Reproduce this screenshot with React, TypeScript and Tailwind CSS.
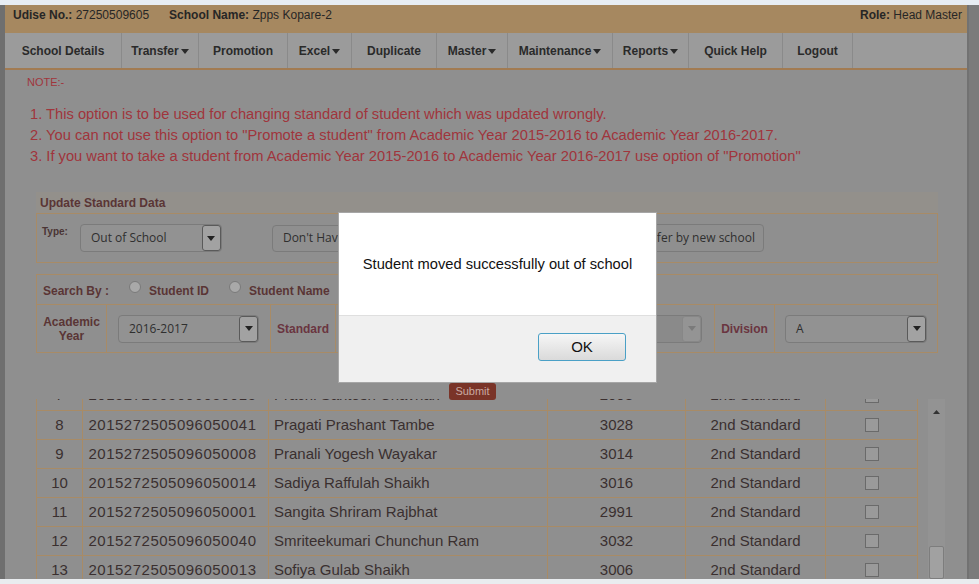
import React from "react";

const navItems = [
  { label: "School Details", w: "w-[117px]", arrow: false },
  { label: "Transfer", w: "w-[77px]", arrow: true },
  { label: "Promotion", w: "w-[89px]", arrow: false },
  { label: "Excel", w: "w-[64px]", arrow: true },
  { label: "Duplicate", w: "w-[85px]", arrow: false },
  { label: "Master", w: "w-[71px]", arrow: true },
  { label: "Maintenance", w: "w-[105px]", arrow: true },
  { label: "Reports", w: "w-[76px]", arrow: true },
  { label: "Quick Help", w: "w-[94px]", arrow: false },
  { label: "Logout", w: "w-[70px]", arrow: false },
];

const rows = [
  ["7", "2015272505096050015", "Prachi Santosh Chavhan", "2993"],
  ["8", "2015272505096050041", "Pragati Prashant Tambe", "3028"],
  ["9", "2015272505096050008", "Pranali Yogesh Wayakar", "3014"],
  ["10", "2015272505096050014", "Sadiya Raffulah Shaikh", "3016"],
  ["11", "2015272505096050001", "Sangita Shriram Rajbhat", "2991"],
  ["12", "2015272505096050040", "Smriteekumari Chunchun Ram", "3032"],
  ["13", "2015272505096050013", "Sofiya Gulab Shaikh", "3006"],
];

function Caret({ className = "" }: { className?: string }) {
  return (
    <svg width="8" height="5" viewBox="0 0 8 5" className={className}>
      <path d="M0 0h8L4 5z" fill="currentColor" />
    </svg>
  );
}

function Select({
  value,
  w,
  disabled = false,
}: {
  value: string;
  w: string;
  disabled?: boolean;
}) {
  return (
    <div
      className={`${w} h-[28px] flex items-center rounded-[4px] border border-[#7b7b7b] ${
        disabled ? "bg-[#8a8a8a]" : "bg-[#929292]"
      }`}
    >
      <span className="flex-1 pl-[10px] text-[12px] text-[#2f2f2f] [font-family:'Open_Sans',sans-serif]">
        {value}
      </span>
      <div
        className={`w-[19px] h-[26px] flex items-center justify-center rounded-[3px] border ${
          disabled
            ? "border-[#878787] bg-[#949494] text-[#7a7a7a]"
            : "border-[#5a5a5a] bg-[#a2a2a2] text-[#222]"
        }`}
      >
        <Caret />
      </div>
    </div>
  );
}

function Radio() {
  return (
    <span className="inline-block w-[12px] h-[12px] rounded-full border border-[#7a7a7a] bg-[#a9a9a9] -mt-[8px]" />
  );
}

export default function App() {
  return (
    <div className="relative w-[979px] h-[584px] overflow-hidden bg-[#8f8f8f] [font-family:'Liberation_Sans',Arial,sans-serif]">
      <div className="h-[5px] bg-[#e7edf3]" />
      <div className="flex h-[574px]">
        <div className="w-[5px] bg-[#6f6f6f]" />
        <div className="w-[962px] flex flex-col">
          {/* header */}
          <div className="h-[28px] shrink-0 flex items-start justify-between pt-[3px] pl-[8px] pr-[5px] bg-[#a68860] text-[12px] leading-[14px] text-[#262626]">
            <div className="flex gap-[20px]">
              <span>
                <b>Udise No.:</b> 27250509605
              </span>
              <span>
                <b>School Name:</b> Zpps Kopare-2
              </span>
            </div>
            <span>
              <b>Role:</b> Head Master
            </span>
          </div>

          {/* nav */}
          <div className="h-[37px] shrink-0 flex bg-[#9b9b9b] border-b-[2px] border-[#a27b52]">
            {navItems.map((n) => (
              <div
                key={n.label}
                className={`${n.w} flex items-center justify-center gap-[2px] border-r border-[#8a8a8a] text-[12px] font-bold text-[#2a2a2a]`}
              >
                {n.label}
                {n.arrow && <Caret className="mt-[2px]" />}
              </div>
            ))}
          </div>

          {/* content */}
          <div className="flex-1 min-h-0 flex flex-col">
            <div className="shrink-0 pt-[6px] pl-[22px] text-[11px] leading-[13px] text-[#a0353c]">NOTE:-</div>
            <div className="shrink-0 mt-[15px] pl-[25px] text-[14.7px] leading-[21px] text-[#a0353c]">
              <div>1. This option is to be used for changing standard of student which was updated wrongly.</div>
              <div>
                2. You can not use this option to "Promote a student" from Academic Year 2015-2016 to Academic Year
                2016-2017.
              </div>
              <div>
                3. If you want to take a student from Academic Year 2015-2016 to Academic Year 2016-2017 use option of
                "Promotion"
              </div>
            </div>

            {/* update standard */}
            <div className="shrink-0 mt-[25px] ml-[31px] w-[902px]">
              <div className="h-[21px] flex items-center pl-[4px] bg-[#93908b] text-[12px] font-bold text-[#5a3535]">
                Update Standard Data
              </div>
              <div className="h-[50px] flex items-center border border-[#a88b66] pl-[5px]">
                <span className="self-start mt-[10px] text-[10px] font-bold text-[#4a3535]">Type:</span>
                <div className="ml-[12px]">
                  <Select value="Out of School" w="w-[142px]" />
                </div>
                <div className="ml-[50px] w-[158px] h-[27px] flex items-center pl-[10px] rounded-[4px] border border-[#7b7b7b] text-[12px] text-[#2f2f2f] [font-family:'Open_Sans',sans-serif] whitespace-nowrap overflow-hidden">
                  Don't Have Student ID
                </div>
                <div className="ml-[184px] w-[150px] h-[28px] flex items-center justify-end pr-[8px] rounded-[4px] border border-[#7b7b7b] text-[12px] text-[#2f2f2f] [font-family:'Open_Sans',sans-serif] whitespace-nowrap overflow-hidden">
                  Transfer by new school
                </div>
              </div>

              {/* search */}
              <div className="mt-[11px] border border-[#a88b66] text-[12px] font-bold text-[#5a3535]">
                <div className="h-[30px] flex items-center border-b border-[#a88b66] pl-[6px] pt-[3px]">
                  <span>Search By :</span>
                  <span className="ml-[20px] flex items-center gap-[8px]">
                    <Radio />
                    Student ID
                  </span>
                  <span className="ml-[20px] flex items-center gap-[8px]">
                    <Radio />
                    Student Name
                  </span>
                </div>
                <div className="h-[47px] flex">
                  <div className="w-[70px] flex items-center justify-center text-center leading-[14px] border-r border-[#a88b66]">
                    Academic
                    <br />
                    Year
                  </div>
                  <div className="w-[164px] flex items-center pl-[11px] border-r border-[#a88b66] font-normal">
                    <Select value="2016-2017" w="w-[141px]" />
                  </div>
                  <div className="w-[65px] flex items-center justify-center border-r border-[#a88b66] text-[#6a3540]">
                    Standard
                  </div>
                  <div className="w-[379px] flex items-center justify-end pr-[12px] border-r border-[#a88b66] font-normal">
                    <Select value="" w="w-[355px]" disabled />
                  </div>
                  <div className="w-[60px] flex items-center justify-center border-r border-[#a88b66] text-[#6a3540]">
                    Division
                  </div>
                  <div className="flex-1 flex items-center pl-[10px] font-normal">
                    <Select value="A" w="w-[142px]" />
                  </div>
                </div>
              </div>
            </div>

            {/* submit */}
            <div className="shrink-0 mt-[30px] h-[16px] flex relative z-10">
              <div className="ml-[444px] w-[47px] h-[17px] flex items-center justify-center rounded-[3px] bg-[#7a3428] text-[11px] text-[#c9aaa2]">
                Submit
              </div>
            </div>

            {/* table */}
            <div className="flex-1 min-h-0 flex overflow-hidden ml-[31px]">
              <div className="w-[882px] overflow-hidden">
                <div className="-mt-[18px] text-[15px] text-[#3a2f2f]">
                  {rows.map((r, i) => (
                    <div
                      key={r[0]}
                      className={`h-[29px] flex border-l border-r border-[#a88b66] ${i === 0 ? "" : "border-t"}`}
                    >
                      <div className="w-[46px] flex items-center justify-center border-r border-[#a88b66]">{r[0]}</div>
                      <div className="w-[186px] flex items-center justify-center pr-[6px] tracking-[0.5px] border-r border-[#a88b66]">
                        {r[1]}
                      </div>
                      <div className="w-[279px] flex items-center pl-[5px] border-r border-[#a88b66]">{r[2]}</div>
                      <div className="w-[138px] flex items-center justify-center border-r border-[#a88b66]">{r[3]}</div>
                      <div className="w-[140px] flex items-center justify-center border-r border-[#a88b66]">2nd Standard</div>
                      <div className="flex-1 flex items-center justify-center">
                        <span className="w-[14px] h-[14px] border border-[#6a6a6a] bg-[#9a9a9a]" />
                      </div>
                    </div>
                  ))}
                </div>
              </div>
              <div className="ml-[10px] w-[17px] flex flex-col bg-[#939393]">
                <div className="h-[26px] flex items-center justify-center text-[#333]">
                  <svg width="7" height="4" viewBox="0 0 7 4">
                    <path d="M0 4h7L3.5 0z" fill="currentColor" />
                  </svg>
                </div>
                <div className="flex-1" />
                <div className="h-[33px] mx-[1px] rounded-[2px] border border-[#7d7d7d] bg-[#a1a1a1]" />
              </div>
            </div>
          </div>
        </div>
        <div className="flex-1 bg-[#7b7b7b] border-l-[2px] border-[#727272]" />
      </div>
      <div className="h-[5px] bg-[#e9ecef]" />

      {/* dialog */}
      <div className="absolute left-[338px] top-[212px] w-[319px] h-[171px] flex flex-col border border-[#a6a6a6] bg-white">
        <div className="h-[102px] flex items-center justify-center text-[14.7px] text-[#111]">
          Student moved successfully out of school
        </div>
        <div className="flex-1 flex items-center justify-end pr-[30px] pb-[4px] bg-[#f0f0f0] border-t border-[#dfdfdf]">
          <div className="w-[88px] h-[28px] flex items-center justify-center rounded-[3px] border-[1.5px] border-[#4aa0c6] bg-gradient-to-b from-[#f6f6f6] to-[#dadada] text-[15px] text-[#111]">
            OK
          </div>
        </div>
      </div>
    </div>
  );
}
